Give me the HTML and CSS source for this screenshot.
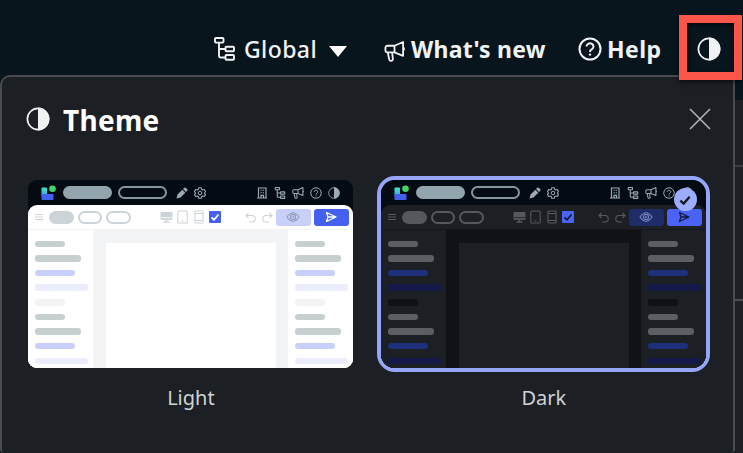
FILE: index.html
```
<!DOCTYPE html>
<html lang="en">
<head>
<meta charset="utf-8">
<title>Theme</title>
<link rel="stylesheet" href="styles.css">
</head>
<body>
<svg class="defs" aria-hidden="true">
  <defs>
    <linearGradient id="teal" x1="0" y1="0" x2="0" y2="1"><stop offset="0" stop-color="#43e5c5"/><stop offset="1" stop-color="#35a9e8"/></linearGradient>
    <symbol id="tree" viewBox="0 0 21 24"><g fill="none" stroke="currentColor" stroke-width="var(--sw, 1.9)"><rect x="1" y="1" width="8.5" height="4.6" rx="1"/><rect x="11.5" y="9.7" width="8.5" height="4.6" rx="1"/><rect x="11.5" y="18" width="8.5" height="4.8" rx="1"/><path d="M5 6v13q0 1.500 1.500 1.500H11.500M5 12H11.500"/></g></symbol>
    <symbol id="horn" viewBox="0 0 22 22"><g fill="none" stroke="currentColor" stroke-width="1.900" stroke-linejoin="round"><path d="M20 1v14.500L11 12H3.500A2 2 0 0 1 1.500 10V7a2 2 0 0 1 2-2H11zM11 5v7M4 12l1.500 7.500q.4 1.500 2 1.300 2-.3 1.800-2L8.500 12M20 6.500q2 1.800 0 3.500"/></g></symbol>
    <symbol id="help" viewBox="0 0 24 24"><g fill="none" stroke="currentColor" stroke-width="2"><circle cx="12" cy="12" r="10.500"/><path d="M8.500 9.500a3.500 3.200 0 1 1 5.500 2.700q-2 1-2 2.800"/></g><circle cx="12" cy="17.600" r="1.200" fill="currentColor"/></symbol>
    <symbol id="contrast" viewBox="0 0 24 24"><circle cx="12" cy="12" r="10.600" fill="none" stroke="currentColor" stroke-width="1.700"/><path d="M12 .600a11.400 11.400 0 0 1 0 22.800z" fill="currentColor"/></symbol>
    <symbol id="logo" viewBox="0 0 15 16"><path d="M.500 3.500q0-1 1-1H5q1 0 1 1V11H.500z" fill="url(#teal)"/><path d="M.500 9H11.500q1 0 1 1v4q0 1-1 1h-10q-1 0-1-1z" fill="#4361ee"/><circle cx="11.500" cy="3.700" r="3.300" fill="#43d66b"/></symbol>
    <symbol id="pencil" viewBox="0 0 12 12"><path d="M.500 11.500l1-4L6.300 2.700l3 3L4.500 10.500zM7 2l1.300-1.300q.7-.6 1.400 0l1.600 1.600q.6.700 0 1.400L10 5z" fill="currentColor"/></symbol>
    <symbol id="gear" viewBox="0 0 12 12"><g fill="none" stroke="currentColor"><path d="M4.800.700h2.400l.4 1.600 1.200.7 1.600-.5 1.100 2-1.100 1.500 1.100 1.600-1.100 2-1.600-.5-1.200.7-.4 1.500H4.800l-.4-1.500-1.200-.7-1.600.5-1.100-2L1.600 6 .500 4.500l1.100-2 1.600.5 1.200-.7z" stroke-width="1.100" stroke-linejoin="round"/><circle cx="6" cy="6" r="1.800"/></g></symbol>
    <symbol id="building" viewBox="0 0 12 12"><g fill="none" stroke="currentColor"><path d="M2.500 10.500V1h7.500v9.500M1 11h10M5 10.500V8.300h2.500v2.200" stroke-width="1.200"/><path d="M4.500 3.300h3.500M4.500 5.800h3.500" stroke-dasharray="1.300 .9"/></g></symbol>
    <symbol id="burger" viewBox="0 0 8 8"><path d="M0 1.500h8M0 4h8M0 6.500h8" stroke="currentColor"/></symbol>
    <symbol id="monitor" viewBox="0 0 13 12"><rect x=".500" y="1" width="12" height="8" rx="1" fill="currentColor"/><path d="M1 6.700h11" stroke="var(--surface)" stroke-width=".8"/><path d="M6.500 8v3M3.500 11h6" stroke="currentColor" stroke-width="1.400"/></symbol>
    <symbol id="tablet" viewBox="0 0 11 14"><rect x=".800" y="1" width="9.400" height="12" rx="1" fill="none" stroke="currentColor" stroke-width="1.100"/><path d="M4.500 10.800h2" stroke="currentColor"/></symbol>
    <symbol id="phone" viewBox="0 0 10 14"><rect x="1" y="1" width="8" height="12" rx="1" fill="none" stroke="currentColor" stroke-width="1.100"/><path d="M1 3.500h8M1 10.500h8" stroke="currentColor"/></symbol>
    <symbol id="undo" viewBox="0 0 11 11"><path d="M3.500 1L1 3.500 3.500 6M1 3.500h6a3.200 3.200 0 0 1 0 6.500H4" fill="none" stroke="currentColor" stroke-width="1.100"/></symbol>
    <symbol id="eye" viewBox="0 0 14 10"><path d="M1 5q6-8.500 12 0-6 8.500-12 0z" fill="none" stroke="currentColor" stroke-width="1.200"/><circle cx="7" cy="5" r="2.600" fill="none" stroke="currentColor" stroke-width="1.200"/><circle cx="7" cy="5" r="1" fill="currentColor"/></symbol>
    <symbol id="send" viewBox="0 0 12 12"><path d="M1.500 1.500L11 6 1.500 10.500 3 6zM3 6h7" fill="none" stroke="currentColor" stroke-width="1.300" stroke-linejoin="round"/></symbol>
    <symbol id="tick" viewBox="0 0 12 12"><path d="M2.500 6.500L5 8.700l4.500-5.200" fill="none" stroke="currentColor" stroke-width="1.700"/></symbol>
  </defs>
</svg>

<div class="app">
  <nav class="topbar">
    <div class="nav-item nav-global"><svg class="i-tree"><use href="#tree"/></svg><span class="t-global">Global</span><i class="caret"></i></div>
    <div class="nav-item nav-news"><svg class="i-horn"><use href="#horn"/></svg><span class="t-news">What's new</span></div>
    <div class="nav-item nav-help"><svg class="i-24"><use href="#help"/></svg><span class="t-help">Help</span></div>
    <div class="nav-item"><svg class="i-24"><use href="#contrast"/></svg></div>
  </nav>
  <div class="body">
    <section class="panel">
      <header class="panel-head">
        <svg class="i-24"><use href="#contrast"/></svg>
        <h1>Theme</h1>
        <svg class="close" viewBox="0 0 22 22"><path d="M1 1l20 20M21 1L1 21" stroke="currentColor" stroke-width="1.500"/></svg>
      </header>
      <div class="options">
        <div class="option light">
          <div class="frame">
            <div class="mock">
              <div class="m-head">
                <svg class="logo"><use href="#logo"/></svg><i class="pill solid"></i><i class="pill"></i>
                <svg class="pencil"><use href="#pencil"/></svg><svg class="gear"><use href="#gear"/></svg>
                <div class="m-icons"><svg><use href="#building"/></svg><svg><use href="#tree"/></svg><svg><use href="#horn"/></svg><svg><use href="#help"/></svg><svg><use href="#contrast"/></svg></div>
              </div>
              <div class="m-page">
                <div class="m-tools">
                  <svg class="burger"><use href="#burger"/></svg><i class="chip solid"></i><i class="chip"></i><i class="chip"></i>
                  <svg class="monitor"><use href="#monitor"/></svg><svg class="tablet"><use href="#tablet"/></svg><svg class="phone"><use href="#phone"/></svg>
                  <svg class="checkbox"><use href="#tick"/></svg><svg class="undo"><use href="#undo"/></svg><svg class="redo"><use href="#undo"/></svg>
                  <span class="btn eye"><svg><use href="#eye"/></svg></span><span class="btn send"><svg><use href="#send"/></svg></span>
                </div>
                <div class="m-body">
                  <div class="side"><i></i><i></i><i></i><i></i><i></i><i></i><i></i><i></i><i></i></div>
                  <div class="canvas"></div>
                  <div class="side"><i></i><i></i><i></i><i></i><i></i><i></i><i></i><i></i><i></i></div>
                </div>
              </div>
            </div>
          </div>
          <div class="label">Light</div>
        </div>
        <div class="option dark selected">
          <div class="frame">
            <div class="mock">
              <div class="m-head">
                <svg class="logo"><use href="#logo"/></svg><i class="pill solid"></i><i class="pill"></i>
                <svg class="pencil"><use href="#pencil"/></svg><svg class="gear"><use href="#gear"/></svg>
                <div class="m-icons"><svg><use href="#building"/></svg><svg><use href="#tree"/></svg><svg><use href="#horn"/></svg><svg><use href="#help"/></svg><svg><use href="#contrast"/></svg></div>
              </div>
              <div class="m-page">
                <div class="m-tools">
                  <svg class="burger"><use href="#burger"/></svg><i class="chip solid"></i><i class="chip"></i><i class="chip"></i>
                  <svg class="monitor"><use href="#monitor"/></svg><svg class="tablet"><use href="#tablet"/></svg><svg class="phone"><use href="#phone"/></svg>
                  <svg class="checkbox"><use href="#tick"/></svg><svg class="undo"><use href="#undo"/></svg><svg class="redo"><use href="#undo"/></svg>
                  <span class="btn eye"><svg><use href="#eye"/></svg></span><span class="btn send"><svg><use href="#send"/></svg></span>
                </div>
                <div class="m-body">
                  <div class="side"><i></i><i></i><i></i><i></i><i></i><i></i><i></i><i></i><i></i></div>
                  <div class="canvas"></div>
                  <div class="side"><i></i><i></i><i></i><i></i><i></i><i></i><i></i><i></i><i></i></div>
                </div>
              </div>
            </div>
            <span class="badge"><svg><use href="#tick"/></svg></span>
          </div>
          <div class="label">Dark</div>
        </div>
      </div>
    </section>
    <aside class="edge"><i class="edge-top"></i><i class="edge-a"></i><i class="edge-b"></i></aside>
  </div>
  <div class="highlight"></div>
</div>
</body>
</html>
```
FILE: styles.css
```
* { box-sizing: border-box; }
body { margin: 0; background: #08151d; font-family: "Noto Sans", "Open Sans", sans-serif; color: #f1f2f3; }
svg { display: block; flex: none; }
i { display: block; flex: none; }
.defs { position: absolute; width: 0; height: 0; }
.app { position: relative; width: 743px; height: 453px; overflow: hidden; display: flex; flex-direction: column; }

.topbar { height: 75px; padding: 22px 0 0 214px; display: flex; align-items: flex-start; flex: none; }
.nav-item { display: flex; align-items: center; height: 54px; flex: none; white-space: nowrap; font-size: 23px; line-height: 32px; }
.nav-global { width: 170px; }
.nav-news { width: 194px; font-weight: 700; }
.nav-help { width: 119px; font-weight: 700; }
.i-tree { width: 21px; height: 24px; }
.i-horn { width: 21px; height: 21px; margin-top: 4px; }
.i-24 { width: 24px; height: 24px; }
.t-global { margin-left: 9px; width: 76px; font-weight: 500; letter-spacing: .4px; }
.t-news { margin-left: 6px; letter-spacing: .25px; }
.t-help { margin-left: 5px; letter-spacing: .4px; }
.caret { margin: 4px 0 0 9px; border: 9px solid transparent; border-top: 11px solid #fff; border-bottom: 0; }

.body { flex: 1; display: flex; min-height: 0; }
.panel { width: 735px; background: #1c1f24; border: 2px solid #4a4b50; border-bottom: 0; border-radius: 10px 0 4px 4px; }
.panel-head { height: 99px; display: flex; align-items: flex-start; padding: 30px 22px 0 24px; }
.panel-head h1 { margin: -8px 0 0 13px; font-size: 28px; line-height: 42px; font-weight: 700; color: #fff; letter-spacing: .3px; }
.close { width: 22px; height: 22px; margin: 1px 0 0 auto; color: #b5b7ba; }

.edge { flex: 1; background: #1c1f24; display: flex; flex-direction: column; }
.edge-top { height: 25px; background: #08151d; }
.edge-a { height: 67px; border-bottom: 2px solid #393b40; }
.edge-b { height: 134px; border-bottom: 2px solid #4a4b50; }

.options { display: flex; gap: 20px; padding-left: 22.4px; }
.option { width: 333px; }
.frame { position: relative; height: 196px; border: 4px solid transparent; border-radius: 18px; }
.selected .frame { border-color: #96a5f8; }
.mock { height: 188px; border-radius: 9px; overflow: hidden; background: #050b12; }
.selected .mock { border-radius: 14px; }
.label { margin-top: 12px; text-align: center; font-size: 20px; line-height: 28px; color: #d0d2d3; }

.light { --surface: #fff; --back: #f2f4f6; --line: #f2f4f6; --muted: #cdd4d7; --bar: #c8cfd1; --blue: #c8d0fa; --pale: #ebecfc; --faint: #f2f4f6; --eye: #c8d0fa; --eye-ink: #8f9bb8; --accent: #4361ee; --ink: #fff; }
.dark { --surface: #1c1f24; --back: #101217; --line: #14171b; --muted: #55585d; --bar: #5b5e63; --blue: #1e307c; --pale: #15194a; --faint: #0e1116; --eye: #1e2c69; --eye-ink: #7186bc; --accent: #4a63f4; --ink: #131b3b; }

.m-head { height: 25px; padding: 0 13px; display: flex; align-items: center; color: #9aabb3; }
.logo { width: 15px; height: 16px; }
.pill { width: 49px; height: 13px; margin-left: 7px; border: 2px solid #8497a0; border-radius: 7px; }
.pill + .pill { margin-left: 6px; }
.pill.solid { background: #92a4ad; border-color: #92a4ad; }
.pencil { width: 12px; height: 12px; margin-left: 9px; }
.gear { width: 12px; height: 12px; margin-left: 6px; }
.m-icons { margin-left: auto; display: flex; gap: 6px; --sw: 2.2; }
.m-icons svg { width: 12px; height: 12px; }

.m-page { height: 163px; background: var(--surface); border-radius: 9px 9px 0 0; overflow: hidden; }
.m-tools { height: 25px; padding-left: 7px; display: flex; align-items: center; color: var(--muted); border-bottom: 1px solid var(--line); }
.burger { width: 8px; height: 8px; margin-right: 2px; }
.chip { width: 24.5px; height: 13px; margin-left: 4px; border: 2px solid var(--muted); border-radius: 7px; }
.chip.solid { background: var(--muted); }
.monitor { width: 13px; height: 12px; margin-left: 29px; }
.tablet { width: 11px; height: 14px; margin-left: 4px; }
.phone { width: 10px; height: 14px; margin-left: 6px; }
.checkbox { width: 12px; height: 12px; margin-left: 5px; background: var(--accent); border-radius: 1px; color: var(--ink); }
.undo { width: 11px; height: 11px; margin-left: 24px; }
.redo { width: 11px; height: 11px; margin-left: 6px; transform: scaleX(-1); }
.btn { width: 35px; height: 17px; margin-left: 3px; border-radius: 3px; display: flex; align-items: center; justify-content: center; flex: none; }
.eye { background: var(--eye); color: var(--eye-ink); }
.eye svg { width: 14px; height: 10px; }
.send { background: var(--accent); color: var(--ink); }
.send svg { width: 12px; height: 12px; }

.m-body { height: 138px; display: flex; background: var(--back); }
.side { width: 65px; flex: none; padding: 10.500px 0 0 6.600px; display: flex; flex-direction: column; gap: 8.15px; background: var(--surface); }
.side i { width: 30px; height: 6.5px; border-radius: 3px; background: var(--bar); }
.side i:nth-child(2), .side i:nth-child(7) { width: 46px; }
.side i:nth-child(3), .side i:nth-child(8) { width: 40px; background: var(--blue); }
.side i:nth-child(4), .side i:nth-child(9) { width: 53px; background: var(--pale); }
.side i:nth-child(5) { background: var(--faint); }
.canvas { flex: 1; margin: 12.500px 12px 0 12.600px; background: var(--surface); }

.badge { position: absolute; left: 292.5px; top: 8px; width: 23px; height: 23px; border-radius: 50%; background: #9badfc; color: #14181f; display: flex; align-items: center; justify-content: center; }
.badge svg { width: 16px; height: 16px; }
.highlight { position: absolute; left: 679px; top: 15px; width: 63px; height: 65px; border: 8px solid #fc5549; box-shadow: 0 2px 5px rgba(0,0,0,.65), inset 0 2px 4px rgba(0,0,0,.65); }
```
